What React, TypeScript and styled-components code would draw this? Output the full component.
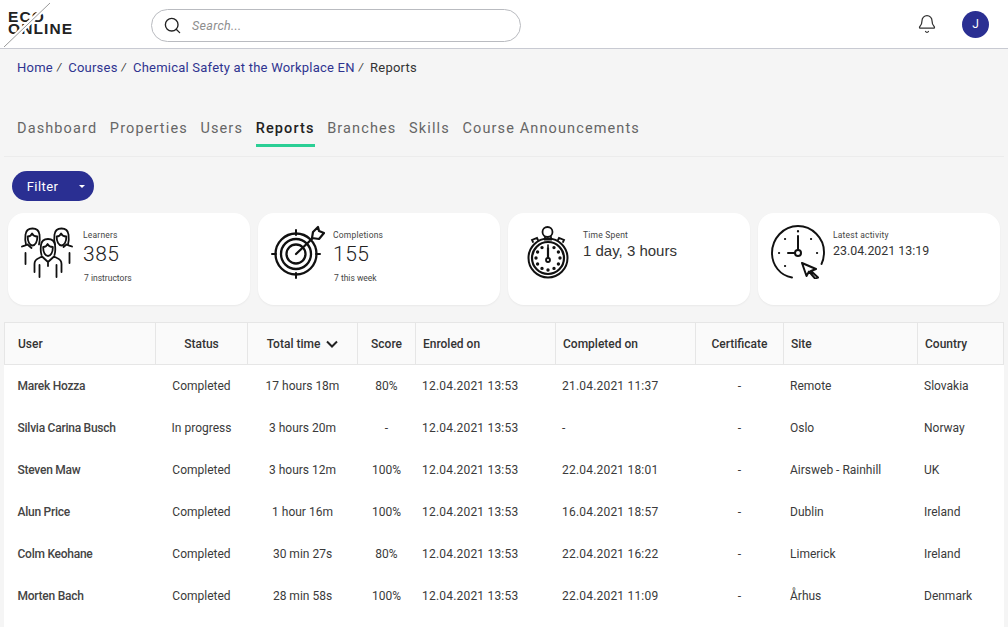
import React from 'react';
import styled, {createGlobalStyle} from 'styled-components';
import {Search, Bell} from 'lucide-react';

const font = `Roboto, "Noto Sans", sans-serif`;

const GlobalStyle = createGlobalStyle`
   html, body {margin: 0; height: 627px; overflow: hidden; background: #f5f5f5;}
   body {font-family: ${font}; color: #333;}
`;

const Header = styled.header`
   height: 46px; background: #fff; border-bottom: 1px solid #c8cad2;
   display: flex; align-items: center; padding: 2px 19px 0 4px; box-sizing: content-box;
`;
const Logo = styled.div`position: relative; width: 72px; height: 46px; flex: none; overflow: hidden; margin-top: -2px;`;
const LogoWord = styled.div`
   position: absolute; top: 10px; left: 4px;
   font: 700 15.500px/12px "Liberation Sans", sans-serif; color: #222; letter-spacing: 1.1px;
`;
const LogoSlash = styled.svg`position: absolute; inset: 0;`;
const SearchBox = styled.div`
   width: 370px; height: 33px; box-sizing: border-box; margin-left: 75px;
   border: 1px solid #b9bbc0; border-radius: 17px; background: #fff;
   display: flex; align-items: center; gap: 10px; padding: 0 11px; color: #222;
`;
const SearchText = styled.span`font-size: 12.5px; font-style: italic; color: #8e8e8e; letter-spacing: 0.3px;`;
const HeaderRight = styled.div`margin-left: auto; margin-top: -2px; display: flex; align-items: center; gap: 25px; color: #333;`;
const Avatar = styled.div`
   width: 27px; height: 27px; border-radius: 50%; background: #2a2f92; color: #fff;
   display: flex; align-items: center; justify-content: center; font-size: 12px;
`;

const Crumbs = styled.nav`display: flex; height: 39px; padding: 11px 0 0 17px; box-sizing: border-box; font-size: 13px; line-height: 16px;`;
const Crumb = styled.a`color: #2f3490; letter-spacing: 0.22px;`;
const Sep = styled.span`margin: 0 7px 0 4px; color: #333; font-style: italic; font-size: 11px;`;
const CrumbPlain = styled.span`color: #333; letter-spacing: 0.22px;`;

const Tabs = styled.div`
   margin: 30px 4px 0; height: 39px; box-sizing: border-box; padding-left: 13px;
   border-bottom: 1px solid #ececec; display: flex; gap: 12.650px;
`;
const Tab = styled.div<{$active?: boolean}>`
   height: 29px; box-sizing: border-box; padding-top: 2px; font-size: 14.5px; line-height: 18px; letter-spacing: 1.12px;
   color: ${p => (p.$active ? '#222' : '#666')};
   font-weight: ${p => (p.$active ? 500 : 400)};
   border-bottom: 3px solid ${p => (p.$active ? '#2bcf95' : 'transparent')};
`;

const FilterBar = styled.div`padding: 14px 0 12px 12px; display: flex;`;
const FilterButton = styled.button`
   width: 82px; height: 30px; border: 0; padding: 0; border-radius: 15px; background: #2a2f92; color: #fff;
   display: flex; align-items: center; font: 400 13px ${font};
`;
const FilterLabel = styled.span`width: 61px; text-align: center; box-sizing: border-box; letter-spacing: 0.4px;`;
const Caret = styled.span`
   margin-left: 6px; width: 0; height: 0;
   border-left: 3px solid transparent; border-right: 3px solid transparent; border-top: 3px solid #fff;
`;

const Cards = styled.div`display: grid; grid-template-columns: repeat(4, 242px); gap: 8px; padding-left: 8px;`;
const Card = styled.div`
   height: 92px; background: #fff; border-radius: 16px; box-shadow: 0 1px 2px rgba(0, 0, 0, 0.05);
   display: flex; box-sizing: border-box; padding: 12px 0 0 12px;
`;
const IconSlot = styled.div`width: 63px; flex: none;`;
const CardBody = styled.div`padding-top: 5px; display: flex; flex-direction: column;`;
const CardLabel = styled.div`font-size: 8.5px; line-height: 10px; color: #444; letter-spacing: 0.2px;`;
const CardNumber = styled.div`font-size: 21px; line-height: 26px; font-weight: 300; color: #222; letter-spacing: 0.5px; margin-top: 1px;`;
const CardText = styled.div`font: 15px/20px "Liberation Sans", sans-serif; color: #333; margin-top: 1px;`;
const CardDate = styled.div`font-size: 12.4px; line-height: 17px; color: #333; margin-top: 2px;`;
const CardSub = styled.div`font-size: 8.5px; line-height: 10px; color: #444; margin-top: 6px; padding-left: 1px;`;

const TableWrap = styled.div`margin: 17px 4px 0 4px; background: #fff; height: 320px;`;
const Table = styled.table`width: 999px; table-layout: fixed; border-collapse: collapse; font-size: 12px;`;
const Th = styled.th<{$left?: boolean; $first?: boolean}>`
   height: 42px; padding: 0 6px 0 ${p => (p.$first ? 13 : p.$left ? 7 : 6)}px; background: #fafafa; border: 1px solid #e6e6e6; font-weight: 500; color: #333;
   box-sizing: border-box;
   text-align: ${p => (p.$left ? 'left' : 'center')};
`;
const Td = styled.td<{$left?: boolean; $name?: boolean; $date?: boolean}>`
   height: 42px; padding: 0 6px 0 ${p => (p.$name ? 13 : p.$left ? 6.5 : 6)}px; color: ${p => (p.$name ? '#444' : '#3a3a3a')};
   font-weight: ${p => (p.$name ? 500 : 400)};
   letter-spacing: ${p => (p.$name ? '-0.25px' : p.$date ? '0.2px' : '0')};
   text-align: ${p => (p.$left ? 'left' : 'center')};
`;
const SortHead = styled.span`display: inline-flex; align-items: center; gap: 6px;`;

function PeopleIcon() {
    const person = (x: number, y: number) => (
        <g transform={`translate(${x} ${y})`}>
            <path d="M-6.500 7C-7.500 4-7.500 1-7 -3-6.500 -7-3.500 -9 0 -9s6.500 2 7 6c.5 4 .5 7-.5 10" />
            <path d="M-4.800 -1c-.2 5 2 9 4.800 9s5-4 4.800-9c-2.500 0-4.300-1-5.300-3-.7 2-2.300 3-4.300 3z" />
        </g>
    );
    return (
        <svg width="52" height="52" viewBox="0 0 52 52" fill="none" stroke="#111" strokeWidth="1.8" strokeLinecap="round" strokeLinejoin="round" style={{marginLeft: 1, marginTop: 2}}>
            {person(11.500, 10.500)}
            {person(40.500, 10.500)}
            <path d="M1 19.500c2-1 4-1 5.500-2l4 3.500M4.500 26v11M51 19.500c-2-1-4-1-5.500-2l-3 2.500M48.500 26v10" />
            <g fill="#fff">
                {person(27, 21)}
            </g>
            <path d="M13.500 44v-7c0-3 2-5 4.500-6l3-1.500 6 5.500 6-5.500 3 1.500c2.500 1 4.500 3 4.500 6v7M18.500 38v12M35.500 38v12M13.500 37v8M40.500 37v8M27 35v4" />
        </svg>
    );
}

function TargetIcon() {
    return (
        <svg width="54" height="54" viewBox="0 0 54 54" fill="none" stroke="#111" strokeWidth="2" strokeLinecap="round" style={{marginLeft: 1}}>
            <circle cx="25" cy="29" r="20.500" strokeWidth="2.300" />
            <circle cx="25" cy="29" r="15" strokeWidth="2.300" />
            <circle cx="25" cy="29" r="9.500" strokeWidth="2.300" />
            <path d="M25 5v5M25 48v5M1 29h4M45 29h4" />
            <path d="M25 29L43 12" strokeWidth="2.300" />
            <path d="M41 13l1-6 5-5 1 4 5 2-5 6-7-1z" fill="#fff" strokeWidth="2.200" strokeLinejoin="round" />
        </svg>
    );
}

function WatchIcon() {
    const dots = [30, 60, 120, 150, 210, 240, 300, 330, 90, 270, 180];
    return (
        <svg width="42" height="54" viewBox="0 0 42 54" fill="none" stroke="#111" strokeWidth="1.8" strokeLinecap="round" style={{marginLeft: 7, marginTop: 1}}>
            <circle cx="21" cy="32" r="19.500" strokeWidth="2" />
            <circle cx="21" cy="32" r="16" strokeWidth="2.200" />
            <circle cx="20.500" cy="6" r="5" strokeWidth="1.800" />
            <path d="M18 11v2h6v-2M17.500 13.500h7" />
            <path d="M6 16l-1-2 5-2 1 2M36 16l1-2-5-2-1 2" />
            <path d="M21 19v2" strokeWidth="1.600" />
            {dots.map(a => {
                const r = (a * Math.PI) / 180;
                return <circle key={a} cx={21 + 12 * Math.sin(r)} cy={32 - 12 * Math.cos(r)} r=".8" fill="#111" />;
            })}
            <path d="M21 22v11" strokeWidth="2.200" />
            <circle cx="21" cy="34" r="2" fill="#fff" strokeWidth="1.800" />
        </svg>
    );
}

function ClockIcon() {
    return (
        <svg width="54" height="54" viewBox="0 0 54 54" fill="none" stroke="#111" strokeWidth="1.900" strokeLinecap="round" strokeLinejoin="round" style={{marginLeft: 1}}>
            <path d="M21 52.500C9 50.500 1 40 1 28 1 14 12 1 27 1c14 0 26 12 26 26 0 5-1 9-2.500 12" />
            <path d="M27 11v14M17 28h7" strokeWidth="2" />
            <circle cx="27" cy="28" r="3" strokeWidth="2" />
            <path d="M27 6v.5M8 28h.1M46 28h.1M14 14h.1M40 14h.1M14 41h.1" strokeWidth="2.200" />
            <path d="M31 38l14 6-5 2 7 6.500-3 1-6-7-2.500 4.500z" strokeWidth="2" />
        </svg>
    );
}

const rows = [
    ['Marek Hozza', 'Completed', '17 hours 18m', '80%', '12.04.2021 13:53', '21.04.2021 11:37', '-', 'Remote', 'Slovakia'],
    ['Silvia Carina Busch', 'In progress', '3 hours 20m', '-', '12.04.2021 13:53', '-', '-', 'Oslo', 'Norway'],
    ['Steven Maw', 'Completed', '3 hours 12m', '100%', '12.04.2021 13:53', '22.04.2021 18:01', '-', 'Airsweb - Rainhill', 'UK'],
    ['Alun Price', 'Completed', '1 hour 16m', '100%', '12.04.2021 13:53', '16.04.2021 18:57', '-', 'Dublin', 'Ireland'],
    ['Colm Keohane', 'Completed', '30 min 27s', '80%', '12.04.2021 13:53', '22.04.2021 16:22', '-', 'Limerick', 'Ireland'],
    ['Morten Bach', 'Completed', '28 min 58s', '100%', '12.04.2021 13:53', '22.04.2021 11:09', '-', 'Århus', 'Denmark'],
];
const widths = [151, 92, 110, 58, 140, 140, 88, 134, 86];
const leftCols = [0, 4, 5, 7, 8];

export default function App() {
    return (
        <>
            <GlobalStyle />
            <Header>
                <Logo>
                    <LogoWord>ECO<br />ONLINE</LogoWord>
                    <LogoSlash width="72" height="46" viewBox="0 0 72 46">
                        <path d="M0 46L46 2" stroke="#fff" strokeWidth="5" />
                        <path d="M0 46L46 2" stroke="#999" strokeWidth="1" />
                    </LogoSlash>
                </Logo>
                <SearchBox>
                    <Search size={19} strokeWidth={1.7} />
                    <SearchText>Search...</SearchText>
                </SearchBox>
                <HeaderRight>
                    <Bell size={20} strokeWidth={1.5} />
                    <Avatar>J</Avatar>
                </HeaderRight>
            </Header>
            <Crumbs>
                <Crumb>Home</Crumb><Sep>/</Sep>
                <Crumb>Courses</Crumb><Sep>/</Sep>
                <Crumb>Chemical Safety at the Workplace EN</Crumb><Sep>/</Sep>
                <CrumbPlain>Reports</CrumbPlain>
            </Crumbs>
            <Tabs>
                <Tab>Dashboard</Tab>
                <Tab>Properties</Tab>
                <Tab>Users</Tab>
                <Tab $active>Reports</Tab>
                <Tab>Branches</Tab>
                <Tab>Skills</Tab>
                <Tab>Course Announcements</Tab>
            </Tabs>
            <FilterBar>
                <FilterButton><FilterLabel>Filter</FilterLabel><Caret /></FilterButton>
            </FilterBar>
            <Cards>
                <Card>
                    <IconSlot><PeopleIcon /></IconSlot>
                    <CardBody>
                        <CardLabel>Learners</CardLabel>
                        <CardNumber>385</CardNumber>
                        <CardSub>7 instructors</CardSub>
                    </CardBody>
                </Card>
                <Card>
                    <IconSlot><TargetIcon /></IconSlot>
                    <CardBody>
                        <CardLabel>Completions</CardLabel>
                        <CardNumber>155</CardNumber>
                        <CardSub>7 this week</CardSub>
                    </CardBody>
                </Card>
                <Card>
                    <IconSlot><WatchIcon /></IconSlot>
                    <CardBody>
                        <CardLabel>Time Spent</CardLabel>
                        <CardText>1 day, 3 hours</CardText>
                    </CardBody>
                </Card>
                <Card>
                    <IconSlot><ClockIcon /></IconSlot>
                    <CardBody>
                        <CardLabel>Latest activity</CardLabel>
                        <CardDate>23.04.2021 13:19</CardDate>
                    </CardBody>
                </Card>
            </Cards>
            <TableWrap>
                <Table>
                    <colgroup>
                        {widths.map((w, i) => <col key={i} style={{width: w}} />)}
                    </colgroup>
                    <thead>
                        <tr>
                            <Th $left $first>User</Th>
                            <Th>Status</Th>
                            <Th>
                                <SortHead>
                                    Total time
                                    <svg width="12" height="8" viewBox="0 0 12 8" fill="none" stroke="#222" strokeWidth="2"><path d="M1 1.500l5 5 5-5" /></svg>
                                </SortHead>
                            </Th>
                            <Th>Score</Th>
                            <Th $left>Enroled on</Th>
                            <Th $left>Completed on</Th>
                            <Th>Certificate</Th>
                            <Th $left>Site</Th>
                            <Th $left>Country</Th>
                        </tr>
                    </thead>
                    <tbody>
                        {rows.map(row => (
                            <tr key={row[0]}>
                                {row.map((cell, i) => (
                                    <Td key={i} $left={leftCols.includes(i)} $name={i === 0} $date={i === 4 || i === 5}>{cell}</Td>
                                ))}
                            </tr>
                        ))}
                    </tbody>
                </Table>
            </TableWrap>
        </>
    );
}
